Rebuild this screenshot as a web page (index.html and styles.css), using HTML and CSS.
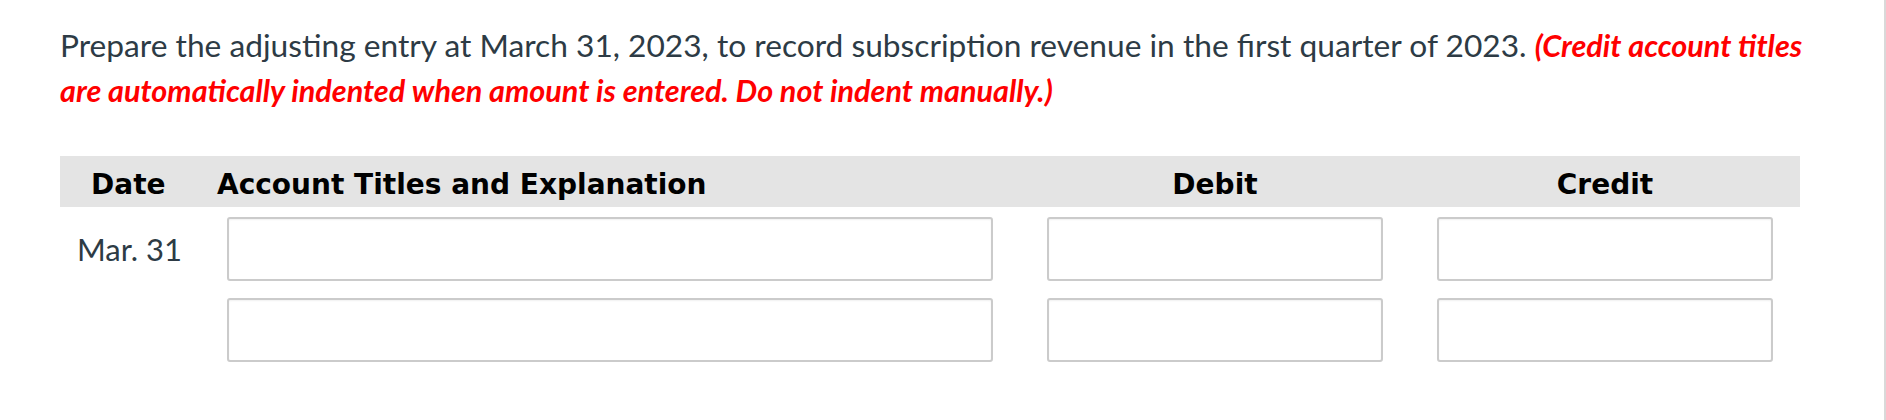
FILE: index.html
```html
<!DOCTYPE html>
<html>
<head>
<meta charset="utf-8">
<link rel="stylesheet" href="styles.css">
</head>
<body>
<div class="page">
  <p class="intro">Prepare the adjusting entry at March 31, 2023, to record subscription revenue in the first quarter of 2023. <em class="note">(Credit account titles are automatically indented when amount is entered. Do not indent manually.)</em></p>
  <div class="journal">
    <div class="head">
      <div class="h-date">Date</div>
      <div class="h-acct">Account Titles and Explanation</div>
      <div class="h-amt">Debit</div>
      <div class="h-amt">Credit</div>
    </div>
    <div class="row">
      <div class="date">Mar. 31</div>
      <div class="cell acct"><input class="field" type="text"></div>
      <div class="cell amt"><input class="field" type="text"></div>
      <div class="cell amt"><input class="field" type="text"></div>
    </div>
    <div class="row">
      <div class="date"></div>
      <div class="cell acct"><input class="field" type="text"></div>
      <div class="cell amt"><input class="field" type="text"></div>
      <div class="cell amt"><input class="field" type="text"></div>
    </div>
  </div>
</div>
</body>
</html>
```

FILE: styles.css
```css
html, body {
  margin: 0;
  padding: 0;
  background: #ffffff;
}
.page {
  box-sizing: border-box;
  width: 1886px;
  height: 420px;
  border-right: 2px solid #d9d9d9;
  padding: 23px 0 0 60px;
  font-family: "Lato", "Liberation Sans", sans-serif;
  color: #2d3b45;
}
.intro {
  margin: 0;
  width: 1760px;
  font-size: 31.7px;
  line-height: 44px;
}
.note {
  color: #ff0000;
  font-weight: 700;
  font-style: italic;
  font-size: 30.6px;
}
.journal {
  width: 1740px;
  margin-top: 43px;
}
.head, .row {
  display: grid;
  grid-template-columns: 157px 803px 390px 390px;
}
.head {
  box-sizing: border-box;
  background: #e4e4e4;
  height: 51px;
  padding-top: 12px;
  color: #000;
  font-family: "DejaVu Sans", Verdana, sans-serif;
  font-weight: 700;
  font-size: 28px;
  line-height: 33px;
}
.h-date {
  padding-left: 31px;
}
.h-amt {
  text-align: center;
}
.row {
  margin-top: 10px;
  height: 64px;
}
.row + .row {
  margin-top: 17px;
}
.date {
  padding-left: 17px;
  font-size: 31px;
  line-height: 64px;
}
.acct {
  padding: 0 27px 0 10px;
}
.amt {
  padding: 0 27px;
}
.field {
  box-sizing: border-box;
  display: block;
  width: 100%;
  height: 64px;
  margin: 0;
  border: 2px solid #cbcbcb;
  border-radius: 3px;
  box-shadow: inset 0 1px 2px rgba(0, 0, 0, 0.06);
  background: #fff;
}
```
